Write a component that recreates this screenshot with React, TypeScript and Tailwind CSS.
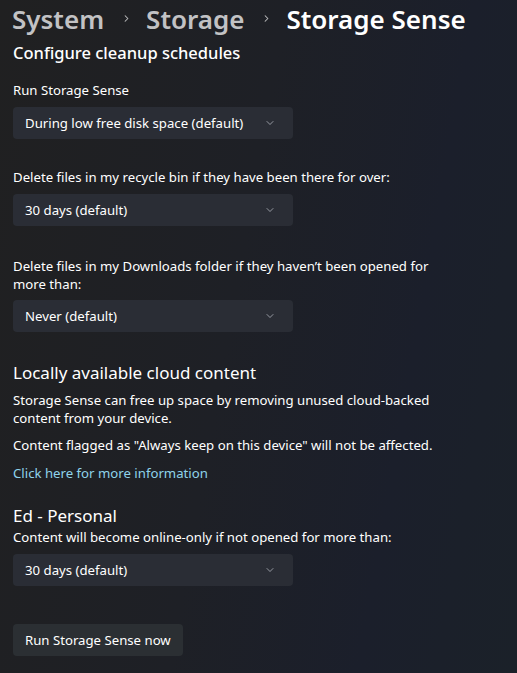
import { ChevronDown, ChevronRight } from "lucide-react";

function Dropdown({ value }: { value: string }) {
  return (
    <div className="flex h-8 w-[280px] items-center justify-between rounded-[4px] bg-[#2a2d35] pl-3 pr-[17px] text-[13.2px] text-white">
      <span>{value}</span>
      <ChevronDown className="h-3 w-3 text-[#b8bcc4]" strokeWidth={1.5} />
    </div>
  );
}

export default function App() {
  return (
    <div className="h-[673px] w-[517px] overflow-hidden bg-[linear-gradient(100deg,#202021_0%,#1e2026_45%,#1b1f2b_75%,#1b2129_100%)] font-['Noto_Sans',sans-serif] text-white">
      <header className="flex h-[47px] items-start pl-3 pt-[1px] text-[26px] font-semibold leading-[36px]">
        <span className="text-[#c2c2c4]">System</span>
        <ChevronRight className="ml-[17px] mr-[14px] mt-[12px] h-[11px] w-[11px] text-[#c2c2c4]" strokeWidth={2.2} />
        <span className="text-[#c2c2c4]">Storage</span>
        <ChevronRight className="ml-[17px] mr-[14px] mt-[12px] h-[11px] w-[11px] text-[#c2c2c4]" strokeWidth={2.2} />
        <span>Storage Sense</span>
      </header>

      <main className="flex flex-col items-start overflow-hidden px-[13px] text-[13.2px] leading-[18px]">
        <h2 className="-mt-[8px] text-[16.5px] font-medium leading-[28px]">Configure cleanup schedules</h2>

        <p className="mt-[14px]">Run Storage Sense</p>
        <div className="mt-2">
          <Dropdown value="During low free disk space (default)" />
        </div>

        <p className="mt-[29px]">Delete files in my recycle bin if they have been there for over:</p>
        <div className="mt-2">
          <Dropdown value="30 days (default)" />
        </div>

        <p className="mt-[31px] w-[430px]">Delete files in my Downloads folder if they haven’t been opened for more than:</p>
        <div className="mt-[7px]">
          <Dropdown value="Never (default)" />
        </div>

        <h2 className="mt-[27px] text-[17px] leading-[28px]">Locally available cloud content</h2>
        <p className="mt-1 w-[430px]">Storage Sense can free up space by removing unused cloud-backed content from your device.</p>
        <p className="mt-[9px]">Content flagged as "Always keep on this device" will not be affected.</p>
        <a className="mt-[10px] text-[#8fd3ea]">Click here for more information</a>

        <h2 className="mt-[22px] text-[17px] leading-[24px]">Ed - Personal</h2>
        <p>Content will become online-only if not opened for more than:</p>
        <div className="mt-2">
          <Dropdown value="30 days (default)" />
        </div>

        <button className="mt-[38px] flex h-8 items-center rounded-[4px] bg-[#2b2f33] px-3 text-[13.2px] text-white">
          Run Storage Sense now
        </button>
      </main>
    </div>
  );
}
